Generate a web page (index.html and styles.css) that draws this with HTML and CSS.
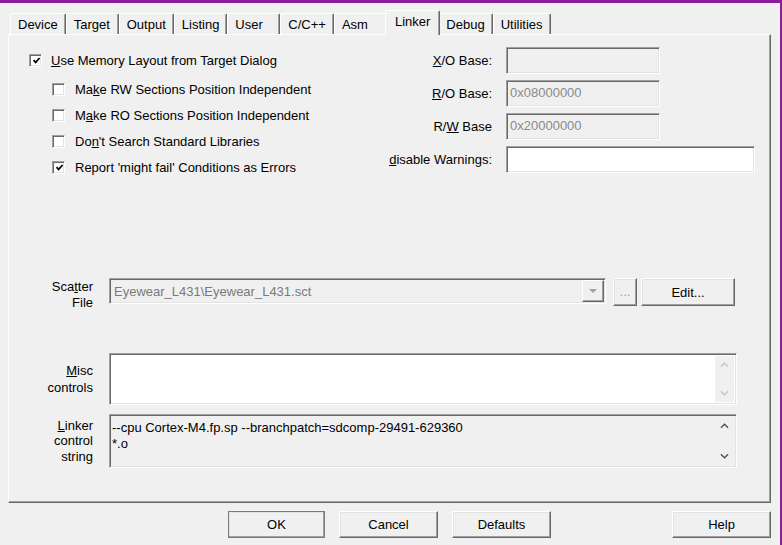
FILE: index.html
```html
<!DOCTYPE html>
<html lang="en">
<head>
  <meta charset="UTF-8">
  <title>Options for Target - Linker</title>
  <link rel="stylesheet" href="styles.css">
</head>
<body>

  <div class="dialog">
    <div class="tabs">
      <div class="tab">Device</div>
      <div class="tab">Target</div>
      <div class="tab">Output</div>
      <div class="tab">Listing</div>
      <div class="tab">User</div>
      <div class="tab">C/C++</div>
      <div class="tab">Asm</div>
      <div class="tab active">Linker</div>
      <div class="tab">Debug</div>
      <div class="tab">Utilities</div>
    </div>

    <div class="panel">
      <div class="top">
        <div class="opts">
          <label class="check"><span class="box"><svg viewBox="0 0 9 9"><path d="M1.5 4.2 L3.6 6.4 L7.6 2"/></svg></span><span><u>U</u>se Memory Layout from Target Dialog</span></label>
          <div class="sub">
            <label class="check"><span class="box"></span><span>Ma<u>k</u>e RW Sections Position Independent</span></label>
            <label class="check"><span class="box"></span><span>M<u>a</u>ke RO Sections Position Independent</span></label>
            <label class="check"><span class="box"></span><span>Do<u>n</u>'t Search Standard Libraries</span></label>
            <label class="check"><span class="box"><svg viewBox="0 0 9 9"><path d="M1.5 4.2 L3.6 6.4 L7.6 2"/></svg></span><span>Report 'mi<u>g</u>ht fail' Conditions as Errors</span></label>
          </div>
        </div>

        <div class="bases">
          <label><u>X</u>/O Base:</label>
          <input class="field short" type="text" value="" disabled>
          <label><u>R</u>/O Base:</label>
          <input class="field short" type="text" value="0x08000000" disabled>
          <label>R/<u>W</u> Base</label>
          <input class="field short" type="text" value="0x20000000" disabled>
          <label><u>d</u>isable Warnings:</label>
          <input class="field white" type="text" value="">
        </div>
      </div>

      <div class="row scatter">
        <div class="lbl">Sca<u>t</u>ter<br>File</div>
        <div class="scatter-ctl">
          <div class="combo">
            <span>Eyewear_L431\Eyewear_L431.sct</span>
            <span class="drop"><i></i></span>
          </div>
          <button class="btn dots" disabled>...</button>
          <button class="btn edit">Edit...</button>
        </div>
      </div>

      <div class="row misc">
        <div class="lbl"><u>M</u>isc<br>controls</div>
        <div class="memo white">
          <div class="memo-text"></div>
          <div class="scroll light">
            <svg viewBox="0 0 10 6"><path d="M1 5 L5 1 L9 5"/></svg>
            <svg viewBox="0 0 10 6"><path d="M1 1 L5 5 L9 1"/></svg>
          </div>
        </div>
      </div>

      <div class="row linker">
        <div class="lbl tight"><u>L</u>inker<br>control<br>string</div>
        <div class="memo">
          <div class="memo-text">--cpu Cortex-M4.fp.sp --branchpatch=sdcomp-29491-629360<br>*.o</div>
          <div class="scroll">
            <svg viewBox="0 0 10 6"><path d="M1 5 L5 1 L9 5"/></svg>
            <svg viewBox="0 0 10 6"><path d="M1 1 L5 5 L9 1"/></svg>
          </div>
        </div>
      </div>
    </div>

    <div class="buttons">
      <button class="btn default">OK</button>
      <button class="btn">Cancel</button>
      <button class="btn">Defaults</button>
      <button class="btn help">Help</button>
    </div>
  </div>

</body>
</html>
```

FILE: styles.css
```css
body {
  margin: 0;
  font-family: "Liberation Sans", Arial, sans-serif;
  font-size: 13px;
  color: #000;
  background: #f0f0f0;
}

.dialog {
  width: 782px;
  height: 545px;
  box-sizing: border-box;
  border-top: 3px solid #8b1e9b;
  border-right: 2px solid #8b1e9b;
  background: #f0f0f0;
  overflow: hidden;
}

/* tab strip */
.tabs {
  display: flex;
  align-items: flex-end;
  height: 31px;
  padding-left: 10px;
}

.tab {
  box-sizing: border-box;
  height: 21px;
  min-width: 53px;
  padding: 0 7px;
  line-height: 22px;
  border-left: 1px solid #fff;
  border-top: 1px solid #fff;
  border-right: 1px solid #696969;
  border-radius: 2px 2px 0 0;
  box-shadow: inset -1px 0 #a0a0a0;
  background: #f0f0f0;
}

.tab.active {
  position: relative;
  z-index: 1;
  height: 25px;
  line-height: 22px;
  margin: 0 -2px -1px;
  padding: 0 9px;
}

/* page */
.panel {
  box-sizing: border-box;
  width: 763px;
  height: 469px;
  margin-left: 8px;
  padding-top: 12px;
  border-top: 1px solid #fff;
  border-left: 1px solid #fff;
  border-right: 1px solid #696969;
  border-bottom: 1px solid #696969;
  box-shadow: inset -1px -1px #a0a0a0;
}

.top {
  display: flex;
  height: 125px;
}

.opts {
  flex: 1;
  padding-left: 20px;
}

.check {
  display: flex;
  align-items: center;
  gap: 9px;
  height: 26px;
}

.sub {
  margin-top: 3px;
  padding-left: 23px;
}

.sub .check {
  gap: 10px;
}

.box {
  box-sizing: border-box;
  width: 13px;
  height: 13px;
  background: #fff;
  border: 1px solid;
  border-color: #a0a0a0 #fff #fff #a0a0a0;
  box-shadow: inset 1px 1px #696969, inset -1px -1px #e3e3e3;
  display: flex;
  align-items: center;
  justify-content: center;
}

.box svg {
  width: 9px;
  height: 9px;
  margin: 1px 0 0 1px;
}

.box path {
  fill: none;
  stroke: #000;
  stroke-width: 1.7;
}

.bases {
  width: 368px;
  margin-right: 15px;
  display: grid;
  grid-template-columns: 105px 1fr;
  column-gap: 14px;
  row-gap: 6px;
  align-content: start;
  align-items: center;
}

.bases label {
  text-align: right;
  white-space: nowrap;
}

.field {
  box-sizing: border-box;
  height: 27px;
  margin: 0;
  padding: 0 3px 2px;
  font: inherit;
  color: #8a8a8a;
  background: #f0f0f0;
  border: 1px solid;
  border-color: #a0a0a0 #fff #fff #a0a0a0;
  box-shadow: inset 1px 1px #696969, inset -1px -1px #e3e3e3;
  outline: none;
}

.field.short {
  width: 154px;
}

.field.white {
  width: 249px;
  background: #fff;
}

/* bottom rows */
.row {
  display: grid;
  grid-template-columns: 84px 1fr;
  column-gap: 16px;
  padding-right: 33px;
}

.lbl {
  text-align: right;
  line-height: 17px;
  align-self: center;
}

.lbl.tight {
  line-height: 15.5px;
}

.scatter {
  height: 28px;
  margin-top: 106px;
}

.scatter .lbl {
  align-self: start;
  line-height: 16px;
  padding-top: 1px;
}

.scatter-ctl {
  display: flex;
  align-items: flex-start;
}

.combo {
  box-sizing: border-box;
  flex: 1;
  height: 26px;
  display: flex;
  align-items: center;
  justify-content: space-between;
  padding: 0 1px 0 4px;
  color: #7a7a7a;
  border: 1px solid;
  border-color: #a0a0a0 #fff #fff #a0a0a0;
  box-shadow: inset 1px 1px #696969, inset -1px -1px #e3e3e3;
}

.drop {
  box-sizing: border-box;
  width: 22px;
  height: 22px;
  display: flex;
  align-items: center;
  justify-content: center;
  border: 1px solid;
  border-color: #fff #696969 #696969 #fff;
  box-shadow: inset -1px -1px #a0a0a0;
}

.drop i {
  width: 0;
  height: 0;
  border-left: 4px solid transparent;
  border-right: 4px solid transparent;
  border-top: 4px solid #a0a0a0;
}

.btn {
  box-sizing: border-box;
  height: 28px;
  margin: 0;
  padding: 0;
  font: inherit;
  color: #000;
  background: #f0f0f0;
  border: 1px solid;
  border-color: #fff #696969 #696969 #fff;
  box-shadow: inset -1px -1px #a0a0a0, inset 1px 1px #e3e3e3;
}

.btn.dots {
  width: 24px;
  margin-left: 7px;
  color: #a0a0a0;
  line-height: 22px;
}

.btn.edit {
  width: 94px;
  margin-left: 4px;
  margin-right: 2px;
}

.misc {
  margin-top: 47px;
}

.linker {
  margin-top: 9px;
}

.memo {
  box-sizing: border-box;
  display: flex;
  height: 54px;
  border: 1px solid;
  border-color: #a0a0a0 #fff #fff #a0a0a0;
  box-shadow: inset 1px 1px #696969, inset -1px -1px #e3e3e3;
}

.misc .memo {
  height: 52px;
}

.memo.white {
  background: #fff;
}

.memo-text {
  flex: 1;
  padding: 5px 2px 0;
  line-height: 16px;
  white-space: nowrap;
}

.scroll {
  width: 19px;
  margin: 2px 2px 2px 0;
  display: flex;
  flex-direction: column;
  justify-content: space-between;
  align-items: center;
  padding: 6px 0;
  box-sizing: border-box;
}

.scroll.light {
  background: #f0f0f0;
}

.scroll svg {
  width: 9px;
  height: 6px;
}

.scroll path {
  fill: none;
  stroke: #4d4d4d;
  stroke-width: 1.4;
}

.scroll.light path {
  stroke: #c4c4c4;
}

/* dialog buttons */
.buttons {
  display: flex;
  gap: 14px;
  margin-top: 8px;
  padding: 0 9px 0 228px;
}

.buttons .btn {
  width: 99px;
  height: 27px;
}

.btn.default {
  width: 97px;
  border-color: #fff #3c3c3c #3c3c3c #fff;
  outline: 1px solid #7a7a7a;
  outline-offset: -1px;
}

.btn.help {
  margin-left: auto;
}
```
